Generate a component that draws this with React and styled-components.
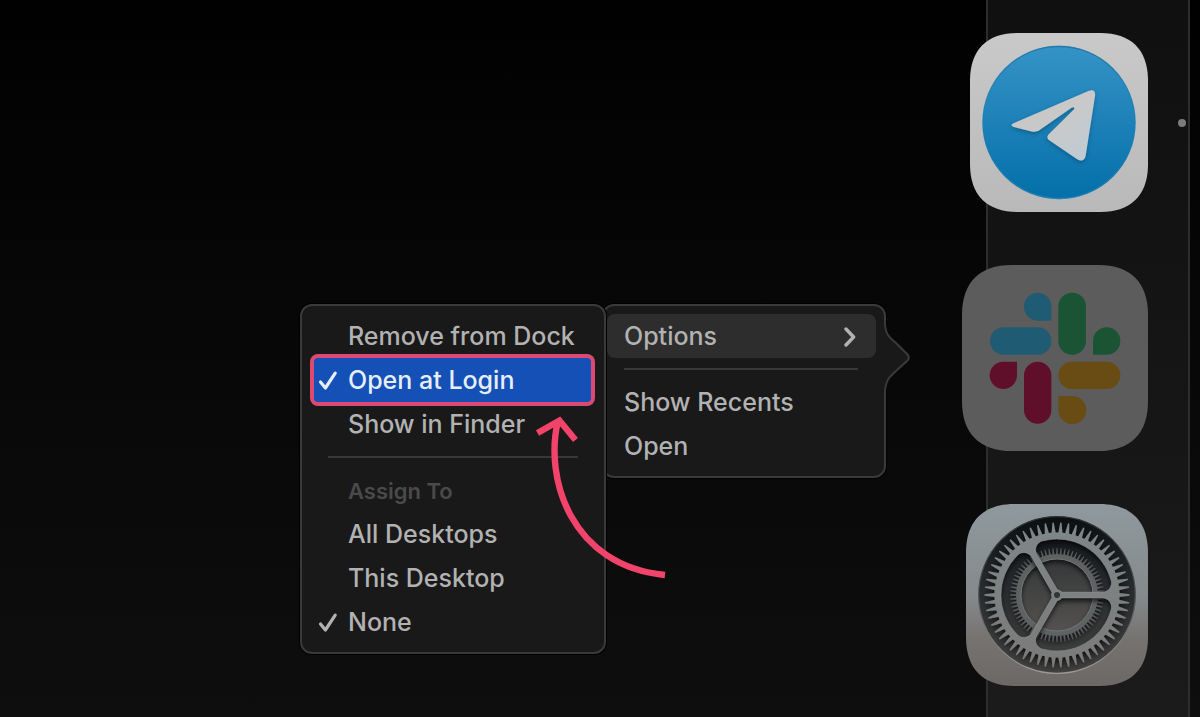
import styled, { createGlobalStyle } from "styled-components";

const GlobalStyle = createGlobalStyle`
  * {
    box-sizing: border-box;
  }
  body {
    margin: 0;
    background-color: #000;
    font-family: Inter, "Liberation Sans", sans-serif;
  }
`;

const Desktop = styled.div`
  min-height: 100vh;
  display: flex;
  background: linear-gradient(#010101, #070707 45%, #0e0e0e);
`;

const Workspace = styled.main`
  flex: 1;
  display: flex;
  justify-content: flex-end;
  align-items: flex-start;
  padding: 304px 100px 0 0;
`;

const Menu = styled.div`
  position: relative;
  display: flex;
  flex-direction: column;
  border: 2px solid #3a3a3a;
  border-radius: 12px;
  background-color: #191919;
  box-shadow: 0 0 0 1px #000;
`;

const SubMenu = styled(Menu)`
  z-index: 1;
  width: 306px;
  padding: 8px 13px 8px 12px;
`;

const MainMenu = styled(Menu)`
  width: 284px;
  margin-left: -4px;
  padding: 8px 8px 8px 3px;
`;

const Item = styled.button`
  height: 44px;
  display: flex;
  align-items: center;
  justify-content: ${({ $spread }) => ($spread ? "space-between" : "flex-start")};
  padding: ${({ $inset }) => ($inset ? "0 18px 0 17px" : "0")};
  border: none;
  border-radius: ${({ $marked }) => ($marked ? "4px" : "8px")};
  background-color: ${({ $marked, $open }) =>
    $marked ? "#1450b5" : $open ? "#2d2d2d" : "transparent"};
  box-shadow: ${({ $marked }) => ($marked ? "0 0 0 4px #dc4a72" : "none")};
  color: ${({ $marked }) => ($marked ? "#e6eefb" : "#b2b2b2")};
  font-family: inherit;
  font-size: 25px;
  font-weight: 500;
  text-align: left;
  white-space: nowrap;
  cursor: pointer;
`;

const Slot = styled.span`
  width: 34px;
  padding-left: 4px;
  display: flex;
  flex-shrink: 0;
`;

const GroupTitle = styled.div`
  height: 44px;
  padding-left: 34px;
  color: #4a4a4a;
  font-size: 22px;
  font-weight: 600;
  line-height: 46px;
`;

const Divider = styled.hr`
  height: 2px;
  margin: 10px 13px 10px 14px;
  border: none;
  background-color: #383838;
`;

const MainDivider = styled(Divider)`
  margin: 10px 18px 10px 17px;
`;

const Pointer = styled.svg`
  position: absolute;
  top: 16px;
  right: -28px;
`;

const ArrowSvg = styled.svg`
  position: absolute;
  top: 104px;
  left: 228px;
  pointer-events: none;
`;

const Dock = styled.nav`
  width: 204px;
  margin-right: 10px;
  padding-top: 33px;
  display: flex;
  flex-direction: column;
  gap: 53px;
  border: solid #2d2d2d;
  border-width: 0 2px;
  background: linear-gradient(#101010, #151515 50%, #1b1b1b);
`;

const DockRow = styled.div`
  display: flex;
  align-items: center;
  justify-content: flex-end;
`;

const AppButton = styled.button`
  flex-shrink: 0;
  padding: 0;
  border: none;
  background: none;
  cursor: pointer;

  svg {
    display: block;
  }
`;

const Status = styled.span`
  width: 40px;
  padding-right: 2px;
  display: flex;
  flex-shrink: 0;
  justify-content: flex-end;
`;

const Dot = styled.i`
  width: 8px;
  height: 8px;
  border-radius: 50%;
  background-color: #7c7c7c;
`;

// rounded app tile, drawn in a 180 unit box
const TILE =
  "M48 0H132C163 0 180 17 180 48V132C180 163 163 180 132 180H48C17 180 0 163 0 132V48C0 17 17 0 48 0Z";

const Check = () => (
  <svg width="20" height="22" viewBox="0 0 20 22" fill="none" aria-hidden="true">
    <path
      d="M2.5 13L7.4 19L17.2 4.2"
      stroke="currentColor"
      strokeWidth="3.2"
      strokeLinecap="round"
      strokeLinejoin="round"
    />
  </svg>
);

const Chevron = () => (
  <svg width="14" height="22" viewBox="0 0 14 22" fill="none" aria-hidden="true">
    <path
      d="M2 4L9.6 12L2 20"
      stroke="currentColor"
      strokeWidth="3.4"
      strokeLinecap="round"
      strokeLinejoin="round"
    />
  </svg>
);

const MenuItem = ({ label, checked, marked }) => (
  <Item $marked={marked}>
    <Slot>{checked && <Check />}</Slot>
    {label}
  </Item>
);

const CurvedArrow = () => (
  <ArrowSvg width="140" height="176" viewBox="530 410 140 176" fill="none" aria-hidden="true">
    <g stroke="#f2436b" strokeWidth="6.4">
      <path d="M558 421C544 478 571 566 665 575" />
      <path d="M537.5 433L559.5 420.5L575.5 440" />
    </g>
  </ArrowSvg>
);

const TelegramIcon = () => (
  <svg width="178" height="179" viewBox="0 0 178 179" aria-hidden="true">
    <defs>
      <linearGradient id="tgTile" x2="0" y2="1">
        <stop stopColor="#c9c9c9" />
        <stop offset="1" stopColor="#b9b9b9" />
      </linearGradient>
      <linearGradient id="tgDisc" x2="0" y2="1">
        <stop stopColor="#3593c6" />
        <stop offset="1" stopColor="#046fa9" />
      </linearGradient>
      <linearGradient id="tgRim" x2="0" y2="1">
        <stop stopColor="#1c6f9c" stopOpacity="0.7" />
        <stop offset="0.5" stopColor="#1c6f9c" stopOpacity="0" />
        <stop offset="1" stopColor="#4a9cc9" stopOpacity="0.4" />
      </linearGradient>
      <linearGradient id="tgPlane" x2="1" y2="1">
        <stop stopColor="#c6c6c6" />
        <stop offset="0.5" stopColor="#c9c9c9" />
        <stop offset="1" stopColor="#bdcbd5" />
      </linearGradient>
      <filter id="tgShadow" x="-20%" y="-20%" width="140%" height="140%">
        <feDropShadow dx="0" dy="2" stdDeviation="2" floodColor="#033a5c" floodOpacity="0.45" />
      </filter>
    </defs>
    <path d={TILE} fill="url(#tgTile)" transform="scale(0.989 0.994)" />
    <circle cx="89" cy="89.5" r="76.7" fill="url(#tgDisc)" />
    <circle cx="89" cy="89.5" r="76" fill="none" stroke="url(#tgRim)" strokeWidth="1.6" />
    <path
      filter="url(#tgShadow)"
      fill="url(#tgPlane)"
      d="M43.5 90.200L119 57.800C123 56.200 125.600 58 125.100 62.500L115.700 122.500C114.800 127.600 111.400 128.700 107.200 126.200L80 107.800C76.800 105.600 76.600 103.400 79.200 100.700L103.600 76.700C105.300 74.600 104.200 73.400 101.600 74.800L70 96.800C67 98.800 64.800 99.200 61.500 98.400L43.800 93.900C40.900 93 40.800 91.400 43.500 90.200Z"
    />
  </svg>
);

const SlackIcon = () => (
  <svg width="186" height="186" viewBox="0 0 558 558" aria-hidden="true">
    <path d={TILE} fill="#5c5c5c" transform="scale(3.1)" />
    <g fill="#1f5b73">
      <path d="M268 167H227A41 42 0 1 1 268 125Z" />
      <rect x="84" y="187" width="184" height="82" rx="41" />
    </g>
    <g fill="#1b5435">
      <rect x="289" y="83" width="83" height="186" rx="41" />
      <path d="M393 269V228A41 41 0 1 1 434 269Z" />
    </g>
    <g fill="#600f2b">
      <path d="M165 290V331A41 41 0 1 1 124 290Z" />
      <rect x="186" y="290" width="82" height="186" rx="41" />
    </g>
    <g fill="#694b14">
      <rect x="289" y="290" width="186" height="82" rx="41" />
      <path d="M289 393H330A42 42 0 1 1 289 434Z" />
    </g>
  </svg>
);

const polar = (r, deg) => {
  const a = (deg * Math.PI) / 180;
  return `${(r * Math.cos(a)).toFixed(2)} ${(r * Math.sin(a)).toFixed(2)}`;
};

const teeth = (count, root, tip, wide, narrow) =>
  Array.from({ length: count }, (_, i) => {
    const a = (i * 360) / count;
    return `M${polar(root, a - wide)}L${polar(tip, a - narrow)}L${polar(tip, a + narrow)}L${polar(root, a + wide)}Z`;
  }).join("");

// one of the three openings between the spokes, at a given turn
const opening = (turn) => {
  const half = 3;
  const fillet = 9;
  const radius = 56;
  const dist = radius - fillet;
  const along = Math.sqrt(dist ** 2 - (half + fillet) ** 2);
  const r1 = Math.hypot(along, half);
  const a1 = (Math.atan2(half, along) * 180) / Math.PI;
  const a2 = (Math.atan2(half + fillet, along) * 180) / Math.PI;
  return [
    `M${polar(3.5, turn + 60)}`,
    `L${polar(r1, turn + a1)}`,
    `A${fillet} ${fillet} 0 0 1 ${polar(radius, turn + a2)}`,
    `A${radius} ${radius} 0 0 1 ${polar(radius, turn + 120 - a2)}`,
    `A${fillet} ${fillet} 0 0 1 ${polar(r1, turn + 120 - a1)}Z`,
  ].join("");
};

const RIM = "M62.5 0A62.5 62.5 0 1 0 -62.5 0A62.5 62.5 0 1 0 62.5 0Z";
const OPENINGS = opening(0) + opening(120) + opening(240);

const SettingsIcon = () => (
  <svg width="182" height="182" viewBox="0 0 182 182" aria-hidden="true">
    <defs>
      <linearGradient id="stTile" x2="0" y2="1">
        <stop stopColor="#8f999d" />
        <stop offset="0.5" stopColor="#858a8c" />
        <stop offset="0.75" stopColor="#75726f" />
        <stop offset="1" stopColor="#6b6865" />
      </linearGradient>
      <linearGradient id="stHole" x2="0" y2="1">
        <stop stopColor="#0b0f11" />
        <stop offset="0.4" stopColor="#25292b" />
        <stop offset="1" stopColor="#454443" />
      </linearGradient>
      <linearGradient id="stEdge" x2="0" y2="1">
        <stop stopColor="#2c3133" />
        <stop offset="0.6" stopColor="#5c5e5e" />
        <stop offset="1" stopColor="#a09e9b" />
      </linearGradient>
      <linearGradient id="stCore" x2="0" y2="1">
        <stop stopColor="#343738" />
        <stop offset="1" stopColor="#555250" />
      </linearGradient>
      <linearGradient id="stWheel" gradientUnits="userSpaceOnUse" x1="0" x2="0" y1="-72" y2="72">
        <stop stopColor="#7f8789" />
        <stop offset="1" stopColor="#7a7a79" />
      </linearGradient>
      <filter id="stShadow" x="-20%" y="-20%" width="140%" height="140%">
        <feDropShadow dx="0" dy="3" stdDeviation="2.4" floodColor="#000" floodOpacity="0.75" />
      </filter>
    </defs>
    <path d={TILE} fill="url(#stTile)" transform="scale(1.011)" />
    <circle cx="91" cy="91" r="78.4" fill="url(#stHole)" stroke="url(#stEdge)" strokeWidth="1.2" />
    <g transform="translate(91 91)">
      <circle r="37" fill="url(#stCore)" />
      <g filter="url(#stShadow)">
        <circle r="38.5" fill="none" stroke="#5f6263" strokeWidth="5" />
        <path d={teeth(72, 40.5, 47, 1.4, 0.5)} fill="#595c5d" />
      </g>
      <circle r="36" fill="none" stroke="#7c7f7f" strokeWidth="0.8" />
      <g filter="url(#stShadow)" fill="url(#stWheel)">
        <path d={RIM + OPENINGS} fillRule="evenodd" />
        <path d={teeth(58, 62, 72.5, 1.9, 0.5)} />
        <circle r="5.6" />
      </g>
      <path d={OPENINGS} fill="none" stroke="#a3a7a8" strokeOpacity="0.45" strokeWidth="0.7" />
      <circle r="5.6" fill="#7c8183" />
      <circle r="3" fill="#303436" />
    </g>
  </svg>
);

const App = () => {
  return (
    <>
      <GlobalStyle />
      <Desktop>
        <Workspace>
          <SubMenu>
            <MenuItem label="Remove from Dock" />
            <MenuItem label="Open at Login" checked marked />
            <MenuItem label="Show in Finder" />
            <Divider />
            <GroupTitle>Assign To</GroupTitle>
            <MenuItem label="All Desktops" />
            <MenuItem label="This Desktop" />
            <MenuItem label="None" checked />
            <CurvedArrow />
          </SubMenu>
          <MainMenu>
            <Item $inset $spread $open>
              Options
              <Chevron />
            </Item>
            <MainDivider />
            <Item $inset>Show Recents</Item>
            <Item $inset>Open</Item>
            <Pointer width="28" height="72" viewBox="884 322 28 72" aria-hidden="true">
              <path
                d="M883 324H885C885 334 889 337 896 343L907 354Q911 357.5 907 361L896 371C889 377 885 381 885 392H883Z"
                fill="#191919"
              />
              <path
                d="M885 322C885 334 889 337 896 343L907.5 354.5Q910 357.5 907.5 360.5L896 371C889 377 885 381 885 394"
                fill="none"
                stroke="#3a3a3a"
                strokeWidth="2"
              />
            </Pointer>
          </MainMenu>
        </Workspace>
        <Dock aria-label="Dock">
          <DockRow>
            <AppButton aria-label="Telegram">
              <TelegramIcon />
            </AppButton>
            <Status>
              <Dot />
            </Status>
          </DockRow>
          <DockRow>
            <AppButton aria-label="Slack">
              <SlackIcon />
            </AppButton>
            <Status />
          </DockRow>
          <DockRow>
            <AppButton aria-label="System Settings">
              <SettingsIcon />
            </AppButton>
            <Status />
          </DockRow>
        </Dock>
      </Desktop>
    </>
  );
};

export default App;
